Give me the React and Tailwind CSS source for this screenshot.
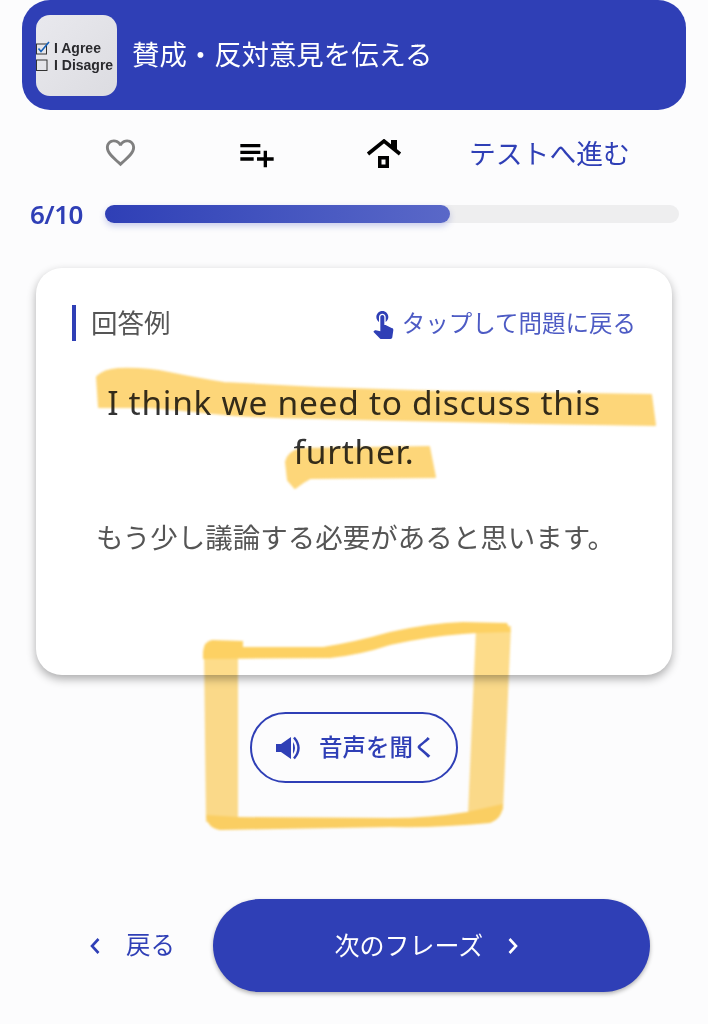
import React from 'react';

const font = { fontFamily: '"Noto Sans", "Noto Sans CJK JP", sans-serif' };

const Thumbnail = () => (
  <div className="w-[81px] h-[81px] shrink-0 rounded-[14px] bg-gradient-to-br from-[#e9e9ee] to-[#dcdce1] overflow-hidden flex flex-col justify-center pt-[3px] font-bold text-[14px] leading-[17px] text-[#2a2a2e] whitespace-nowrap" style={{ fontFamily: '"Liberation Sans", sans-serif' }}>
    <div className="flex items-center gap-[3px]">
      <svg className="shrink-0" width="15" height="14" viewBox="0 0 15 14">
        <rect x="0.5" y="3" width="10" height="10" fill="none" stroke="#333" strokeWidth="1" />
        <path d="M2.5 7.5 L5 10.5 L13 1" fill="none" stroke="#1560b8" strokeWidth="1.6" />
      </svg>
      <span>I Agree</span>
    </div>
    <div className="flex items-center gap-[4px]">
      <svg className="shrink-0" width="14" height="14" viewBox="0 0 14 14">
        <rect x="0.5" y="2" width="10.5" height="10.5" fill="none" stroke="#333" strokeWidth="1" />
      </svg>
      <span>I Disagre</span>
    </div>
  </div>
);

const Highlights = () => (
  <svg className="absolute top-0 left-0 mix-blend-multiply pointer-events-none blur-[1px]" width="708" height="1024" viewBox="0 0 708 1024">
    <g fill="#fdd679" stroke="#fdd679" strokeWidth="2" strokeLinejoin="round">
      <path d="M97 377 Q104 370 118 369 Q145 368 169 373 Q198 379 224 383 L318 388 L446 392 L651 395 L655 425 L531 423 L403 420 L276 417 Q240 416 212 413 Q175 409 148 407 L99 407 Z" />
      <path d="M286 462 Q288 452 301 449 L429 447 L435 477 L310 478 Q302 482 295 488 L288 480 Z" />
    </g>
    <g fill="#fddc8a">
      <path d="M204 650 L238 650 L238 822 L206 822 Z" />
      <path d="M476 628 L511 626 L503 810 L468 815 Z" />
    </g>
    <g fill="#fdd163" strokeLinejoin="round">
      <path d="M203 652 Q204 641 212 640 L243 641 L243 647 L323 647 Q355 642 390 632 Q430 623 463 622 L507 623 L511 632 L477 633 L463 634 Q425 637 390 645 Q360 655 330 658 L203 659 Z" />
      <path d="M206 815 L238 817 L390 818 Q430 818 467 812 L503 804 Q503 818 490 823 Q440 828 390 827 L220 830 Q207 828 206 815 Z" />
    </g>
  </svg>
);

const App = () => {
  return (
    <div className="relative w-[708px] h-[1024px] overflow-hidden bg-[#fcfcfd]" style={font}>
      <div className="mx-[22px] h-[110px] rounded-[28px] bg-[#2f3fb6] flex items-center pl-[14px] gap-[15px]">
        <Thumbnail />
        <span className="text-[27.4px] text-white whitespace-nowrap">賛成・反対意見を伝える</span>
      </div>

      <div className="mt-[24px] h-[40px] flex items-center">
        <svg className="ml-[103px] mb-[3px] text-[#808080]" width="35" height="35" viewBox="0 0 24 24" fill="currentColor">
          <path d="M16.5 3c-1.74 0-3.41.81-4.5 2.09C10.91 3.81 9.24 3 7.5 3 4.42 3 2 5.42 2 8.5c0 3.78 3.4 6.86 8.55 11.54L12 21.35l1.45-1.32C18.6 15.36 22 12.28 22 8.5 22 5.42 19.58 3 16.5 3zm-4.4 15.55l-.1.1-.1-.1C7.14 14.24 4 11.39 4 8.5 4 6.5 5.5 5 7.5 5c1.54 0 3.04.99 3.57 2.36h1.87C13.46 5.99 14.96 5 16.5 5c2 0 3.5 1.5 3.5 3.5 0 2.89-3.14 5.74-7.9 10.05z" />
        </svg>
        <svg className="ml-[99px] text-black" width="40" height="40" viewBox="0 0 24 24" fill="currentColor">
          <path d="M14 10H2v2h12v-2zm0-4H2v2h12V6zm4 8v-4h-2v4h-4v2h4v4h2v-4h4v-2h-4zM2 16h8v-2H2v2z" />
        </svg>
        <svg className="ml-[89px]" width="36" height="30" viewBox="0 0 36 30">
          <path d="M2 15 L18 2 L34 15" fill="none" stroke="#000" strokeWidth="3.6" />
          <path d="M25 1 H31 V12 L25 7 Z" fill="#000" />
          <path fillRule="evenodd" d="M12 17 H23 V29 H12 Z M15.5 20.5 V25.5 H19.5 V20.5 Z" fill="#000" />
        </svg>
        <span className="ml-[67px] text-[26.8px] text-[#2f3fb6] whitespace-nowrap">テストへ進む</span>
      </div>

      <div className="mt-[27px] flex items-center pl-[30px]">
        <span className="w-[75px] text-[26px] leading-[26px] font-semibold text-[#2f3fb6] tracking-[-0.5px]">6/10</span>
        <div className="w-[574px] h-[18px] rounded-full bg-[#eeeeef]">
          <div className="w-[345px] h-[18px] rounded-full bg-gradient-to-r from-[#2f3fb6] to-[#5a68c8] shadow-[0_3px_6px_rgba(47,63,182,0.25)]" />
        </div>
      </div>

      <div className="mt-[41px] mx-[36px] h-[407px] rounded-[26px] bg-white shadow-[0_4px_10px_rgba(0,0,0,0.32)] pt-[37px] px-[36px]">
        <div className="flex items-center justify-between">
          <div className="flex items-center gap-[15px]">
            <div className="w-[4px] h-[36px] bg-[#2f3fb6]" />
            <span className="text-[26.5px] leading-[36px] text-[#555555]">回答例</span>
          </div>
          <div className="flex items-center gap-[3px]">
            <svg className="text-[#2f3fb6]" width="32" height="32" viewBox="0 0 24 24" fill="currentColor">
              <path d="M9 11.24V7.5C9 6.12 10.12 5 11.5 5S14 6.12 14 7.5v3.74c1.21-.81 2-2.18 2-3.74C16 5.01 13.99 3 11.5 3S7 5.01 7 7.5c0 1.56.79 2.93 2 3.74zm9.84 4.63l-4.54-2.26c-.17-.07-.35-.11-.54-.11H13v-6c0-.83-.67-1.5-1.5-1.5S10 6.67 10 7.5v10.74l-3.43-.72c-.08-.01-.15-.03-.24-.03-.31 0-.59.13-.79.33l-.79.8 4.94 4.94c.27.27.65.44 1.06.44h6.79c.75 0 1.33-.55 1.44-1.28l.75-5.27c.01-.07.02-.14.02-.2 0-.62-.38-1.16-.91-1.42z" />
            </svg>
            <span className="text-[23.5px] leading-[32px] text-[#4d5bc4] whitespace-nowrap">タップして問題に戻る</span>
          </div>
        </div>
        <p className="mt-[37px] text-center text-[33.5px] leading-[49px] text-[#333333] tracking-[0.7px] whitespace-nowrap">
          I think we need to discuss this<br />further.
        </p>
        <p className="mt-[42px] ml-[24px] text-[27.5px] leading-[40px] text-[#555555] whitespace-nowrap">もう少し議論する必要があると思います。</p>
      </div>

      <div className="mt-[37px] flex justify-center">
        <div className="w-[208px] h-[71px] rounded-full border-2 border-[#2f3fb6] flex items-center pl-[23px] gap-[17px]">
          <svg width="27" height="26" viewBox="0 0 27 26" className="text-[#2f3fb6]">
            <path d="M1 9 H6 L16 2 V24 L6 17 H1 Z" fill="currentColor" />
            <path d="M18 7 Q22 13 18 19 Z" fill="currentColor" />
            <path d="M19 2.5 Q28 13 19 23.5" fill="none" stroke="currentColor" strokeWidth="2.4" />
          </svg>
          <span className="text-[23.5px] text-[#2f3fb6] font-medium whitespace-nowrap">音声を聞く</span>
        </div>
      </div>

      <div className="mt-[116px] flex items-center">
        <div className="w-[213px] flex items-center pl-[88px] gap-[24px] text-[#2f3fb6]">
          <svg width="14" height="20" viewBox="0 0 14 20" fill="none" stroke="currentColor" strokeWidth="2.6">
            <path d="M10.5 3 L4 10 L10.5 17" />
          </svg>
          <span className="text-[24.5px] whitespace-nowrap">戻る</span>
        </div>
        <div className="w-[437px] h-[93px] rounded-full bg-[#2f3fb6] shadow-[0_2px_4px_rgba(0,0,0,0.3)] flex items-center justify-center pr-[8px] gap-[23px] text-white">
          <span className="text-[25px] whitespace-nowrap">次のフレーズ</span>
          <svg width="14" height="20" viewBox="0 0 14 20" fill="none" stroke="currentColor" strokeWidth="2.6">
            <path d="M3.5 3 L10 10 L3.5 17" />
          </svg>
        </div>
      </div>

      <Highlights />
    </div>
  );
};

export default App;
